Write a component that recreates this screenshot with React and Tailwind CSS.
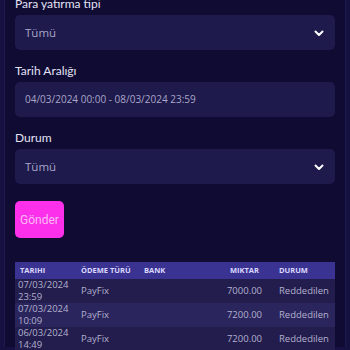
import React from 'react';

const Chevron = () => (
  <svg width="12" height="12" viewBox="0 0 24 24" fill="none" stroke="white" strokeWidth="4" strokeLinecap="round" strokeLinejoin="round">
    <path d="M5 9l7 7 7-7" />
  </svg>
);

const Field = ({ label, value, select, mt, valueSize }) => (
  <div className={mt}>
    <div className="text-[12px] leading-[14px] text-[#e4e2f5] mb-[4px]" style={{ fontFamily: 'Lato, sans-serif' }}>{label}</div>
    <div className="h-[35px] rounded-[5px] bg-[#1e1a4b] flex items-center justify-between pl-[10px] pr-[10px]">
      <span className={`${valueSize} text-[#a9a6c9]`}>{value}</span>
      {select && <Chevron />}
    </div>
  </div>
);

const rows = [
  { d: '07/03/2024', t: '23:59', type: 'PayFix', amt: '7000.00', status: 'Reddedilen', bg: 'bg-[#221d4c]' },
  { d: '07/03/2024', t: '10:09', type: 'PayFix', amt: '7200.00', status: 'Reddedilen', bg: 'bg-[#2a255c]' },
  { d: '06/03/2024', t: '14:49', type: 'PayFix', amt: '7200.00', status: 'Reddedilen', bg: 'bg-[#221d4c]' },
];

export default function App() {
  return (
    <div className="w-[350px] h-[350px] overflow-hidden bg-[#151140] px-[4px]" style={{ fontFamily: '"Open Sans", sans-serif' }}>
      <div className="h-full bg-[#0f0b33] border-x border-[#1d1850] px-[10px] -mt-[3px]">
        <Field label="Para yatırma tipi" value="Tümü" select valueSize="text-[11.5px]" />
        <Field label="Tarih Aralığı" value="04/03/2024 00:00 - 08/03/2024 23:59" mt="mt-[14px]" valueSize="text-[10px]" />
        <Field label="Durum" value="Tümü" select mt="mt-[14px]" valueSize="text-[11.5px]" />
        <button
          className="mt-[17px] w-[49px] h-[37px] rounded-[5px] bg-[#fc30ea] text-[12px] text-[#ffb8f6]"
          style={{ fontFamily: 'Roboto, sans-serif' }}
        >
          Gönder
        </button>
        <table className="mt-[24px] w-full border-collapse text-left">
          <thead>
            <tr className="bg-[#3b3391] h-[17px] text-[7.5px] font-bold text-[#dcd9ff]">
              <th className="pl-[5px] w-[66px]">TARIHI</th>
              <th className="w-[63px]">ÖDEME TÜRÜ</th>
              <th>BANK</th>
              <th className="text-right pr-[20px]">MIKTAR</th>
              <th className="w-[56px]">DURUM</th>
            </tr>
          </thead>
          <tbody>
            {rows.map((r, i) => (
              <tr key={i} className={`${r.bg} h-[24px] text-[9.5px] text-[#b3b0cf]`}>
                <td className="pl-[3px] leading-[12px]">
                  <div>{r.d}</div>
                  <div>{r.t}</div>
                </td>
                <td>{r.type}</td>
                <td></td>
                <td className="text-right pr-[17px]">{r.amt}</td>
                <td>{r.status}</td>
              </tr>
            ))}
          </tbody>
        </table>
      </div>
    </div>
  );
}
